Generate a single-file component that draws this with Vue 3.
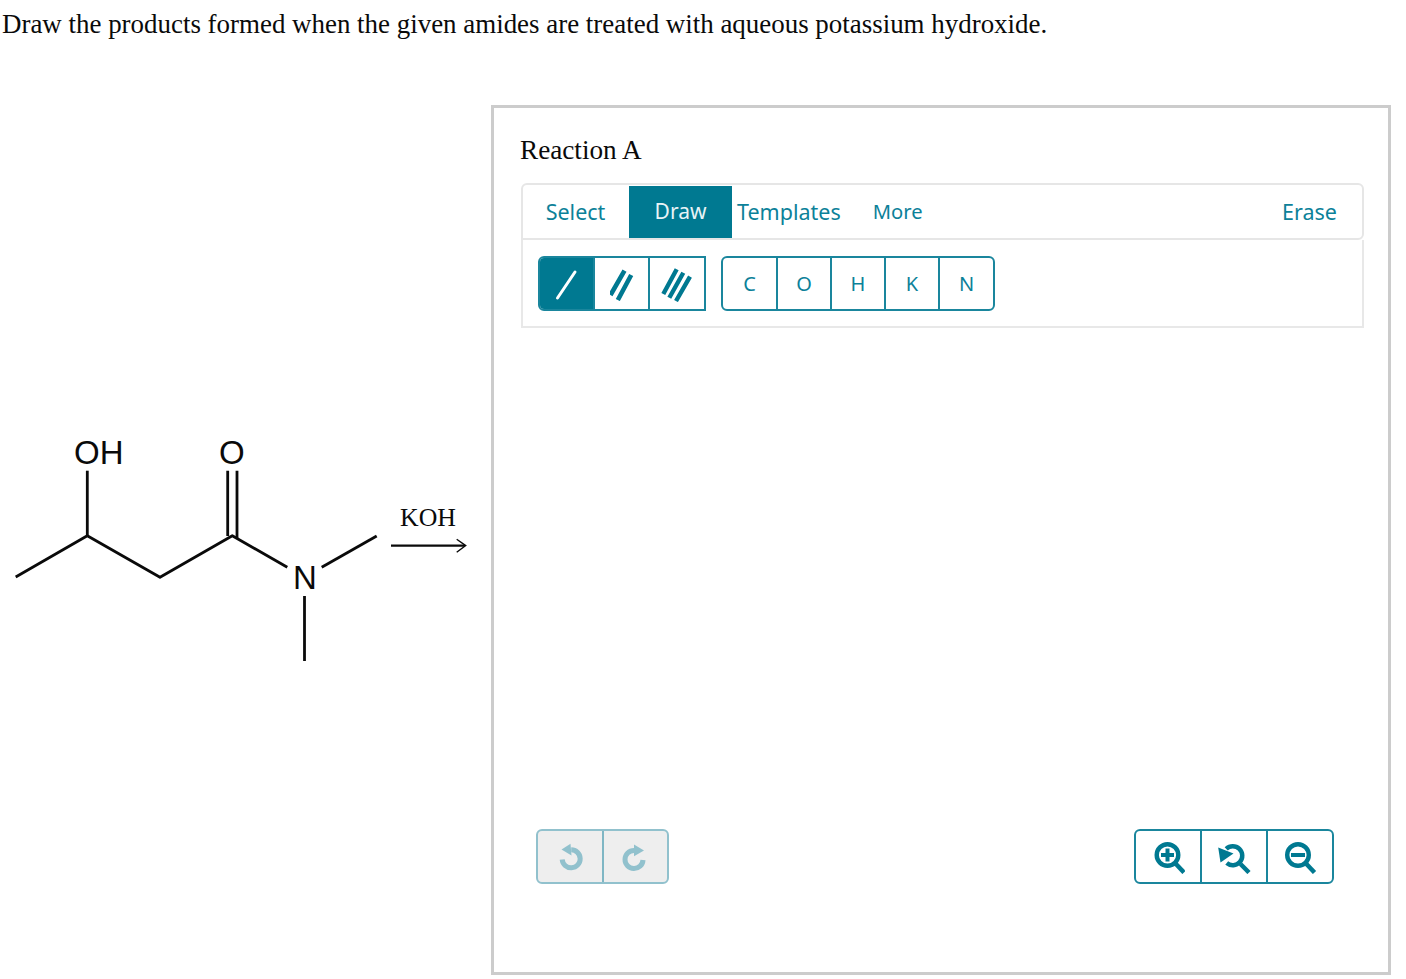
<script setup>
const tabs = ['Select', 'Draw', 'Templates', 'More']
const atoms = ['C', 'O', 'H', 'K', 'N']
</script>

<template>
  <main class="page">
    <p class="prompt">Draw the products formed when the given amides are treated with aqueous potassium hydroxide.</p>
    <div class="content">
      <svg class="molecule" viewBox="0 105 491 870" width="491" height="870">
        <g fill="none" stroke="#0a0a0a" stroke-width="2.8" stroke-linecap="butt">
          <path d="M15.7 577 87.3 535.7 160 577.3 232.3 535.7 287.3 567.3" stroke-linejoin="round" />
          <path d="M321.7 567.3 376.7 536" />
          <path d="M304.5 596V661" />
          <path d="M87.3 536V470.7" />
          <path d="M227.7 536V470.7M237 538V470.7" />
          <path d="M391 545.6H465" stroke-width="2.2" />
          <path d="M456.7 539.3 465.7 545.6 456.7 552.3" stroke-width="1.4" />
        </g>
        <g class="atom">
          <text x="74" y="464">OH</text>
          <text x="219" y="464">O</text>
          <text x="293" y="589">N</text>
        </g>
        <text class="reagent" x="400" y="526">KOH</text>
      </svg>

      <section class="panel">
        <h2 class="title">Reaction A</h2>
        <div class="tabbar">
          <button v-for="t in tabs" :key="t" class="tab" :class="['tab-' + t.toLowerCase(), { active: t === 'Draw' }]">{{ t }}</button>
          <button class="tab tab-erase">Erase</button>
        </div>
        <div class="tools">
          <div class="group bonds">
            <button class="cell on">
              <svg width="24" height="34" viewBox="0 0 24 34"><path d="M2.500 31 20 5" stroke="#fff" stroke-width="3" stroke-linecap="round" /></svg>
            </button>
            <button class="cell">
              <svg width="24" height="34" viewBox="0 0 24 34"><path d="M0.500 28 14.500 3.700M7.800 33 21.200 8" stroke="#007991" stroke-width="4.600" /></svg>
            </button>
            <button class="cell">
              <svg width="32" height="36" viewBox="0 0 32 36"><path d="M2.300 28 15.700 3.300M8.300 31.700 22.300 6.700M15 35 29 10.700" stroke="#007991" stroke-width="4.400" /></svg>
            </button>
          </div>
          <div class="group atoms">
            <button v-for="a in atoms" :key="a" class="cell letter">{{ a }}</button>
          </div>
        </div>

        <div class="canvas">
          <div class="group history">
            <button class="cell wide">
              <svg width="28" height="30" viewBox="0 0 28 30">
                <path d="M15.200 7.800A9 9 0 1 1 6.200 17.500" fill="none" stroke="#91c1cd" stroke-width="5" />
                <path d="M5.500 7.500 14.500 1.800 15.500 13.500Z" fill="#91c1cd" />
              </svg>
            </button>
            <button class="cell wide">
              <svg width="28" height="30" viewBox="0 0 28 30">
                <path d="M13 8.500A9 9 0 1 0 22 18" fill="none" stroke="#91c1cd" stroke-width="5" />
                <path d="M23 8.500 13 2.500 13 14.200Z" fill="#91c1cd" />
              </svg>
            </button>
          </div>
          <div class="group zoom">
            <button class="cell wide">
              <svg width="34" height="34" viewBox="0 0 34 34">
                <circle cx="16.500" cy="15" r="10.800" fill="none" stroke="#007991" stroke-width="4.400" />
                <path d="M24 23 33 32.500" stroke="#007991" stroke-width="4.500" />
                <path d="M16.500 8.500V21.500M10 15H23" stroke="#007991" stroke-width="4" />
              </svg>
            </button>
            <button class="cell wide">
              <svg width="34" height="34" viewBox="0 0 34 34">
                <path d="M9.200 8.800A9.500 9.500 0 1 1 9.700 23" fill="none" stroke="#007991" stroke-width="4.500" />
                <path d="M23.500 24 32 32.500" stroke="#007991" stroke-width="4.500" />
                <path d="M1.200 7.500 16.500 13.500 3.500 22.500Z" fill="#007991" />
              </svg>
            </button>
            <button class="cell wide">
              <svg width="34" height="34" viewBox="0 0 34 34">
                <circle cx="15" cy="15" r="10.800" fill="none" stroke="#007991" stroke-width="4.400" />
                <path d="M22.500 23 31.500 32.500" stroke="#007991" stroke-width="4.500" />
                <path d="M8 15H22" stroke="#007991" stroke-width="4" />
              </svg>
            </button>
          </div>
        </div>
      </section>
    </div>
  </main>
</template>

<style>
html, body { margin: 0; background: #fff; }
</style>

<style scoped>
.page {
  height: 979px;
  overflow: hidden;
  font-family: "Liberation Serif", serif;
  color: #0a0a0a;
}
.prompt {
  margin: 0;
  padding: 9px 0 0 2px;
  font-size: 26.930px;
  line-height: 31px;
  height: 96px;
}
.content { display: flex; }
.molecule { flex: none; display: block; }
.atom text { font-family: "Liberation Sans", sans-serif; font-size: 33px; fill: #0a0a0a; }
.reagent { font-family: "Liberation Serif", serif; font-size: 25.800px; fill: #0a0a0a; }

.panel {
  box-sizing: border-box;
  width: 900px;
  height: 870px;
  border: 3px solid #ccc;
  padding: 27px 24px 0 26px;
  display: flex;
  flex-direction: column;
}
.title {
  margin: 0 0 17px;
  font-weight: 400;
  font-size: 27.200px;
  line-height: 31px;
}
button {
  border: 0;
  padding: 0;
  margin: 0;
  background: none;
  font-family: "Noto Sans", sans-serif;
  color: #007991;
}
.tabbar {
  box-sizing: border-box;
  margin-left: 1px;
  height: 57px;
  border: 2px solid #e6e6e6;
  border-radius: 6px 6px 6px 0;
  padding: 1px 0 0;
  display: flex;
  align-items: stretch;
}
.tab { font-size: 21.500px; height: 52px; padding-bottom: 2px; color: #0c8199; }
.tab-select { width: 105px; margin-right: 1px; }
.tab-draw { width: 103px; font-size: 21px; }
.tab-templates { margin-left: 5px; }
.tab-more { margin-left: 32px; font-size: 20.200px; }
.tab-erase { margin-left: auto; margin-right: 25px; }
.tab.active { background: #007991; color: #e8f3f6; }
.tools {
  box-sizing: border-box;
  margin-left: 1px;
  height: 88px;
  border: 2px solid #e8e8e8;
  border-top: 0;
  padding: 16px 0 0 15px;
  display: flex;
  align-items: flex-start;
  gap: 15px;
}
.group {
  display: flex;
  box-sizing: border-box;
  height: 55px;
  border: 2px solid #1a869d;
  border-radius: 6px;
  overflow: hidden;
}
.bonds { border-radius: 6px 0 0 6px; width: 168px; }
.cell {
  flex: 1 1 0;
  display: flex;
  align-items: center;
  justify-content: center;
  border-left: 2px solid #1a869d;
}
.cell:first-child { border-left: 0; }
.cell.on { background: #007991; }
.bonds .cell { flex: 0 0 53px; }
.bonds .cell:nth-child(2) { flex-basis: 55px; }
.bonds .cell:last-child { flex: 1 1 0; }
.atoms { width: 274px; }
.atoms .cell { flex: 0 0 54px; }
.atoms .cell:first-child { flex-basis: 53px; }
.atoms .cell:last-child { flex: 1 1 0; }
.letter { font-size: 20px; color: #0c8199; }
.canvas {
  flex: 1;
  display: flex;
  justify-content: space-between;
  align-items: flex-start;
  padding: 501px 30px 0 16px;
}
.history {
  width: 133px;
  background: #eee;
  border-color: #91c1cd;
}
.history .cell { border-left-color: #7fb6c4; }
.zoom { width: 200px; }
</style>
